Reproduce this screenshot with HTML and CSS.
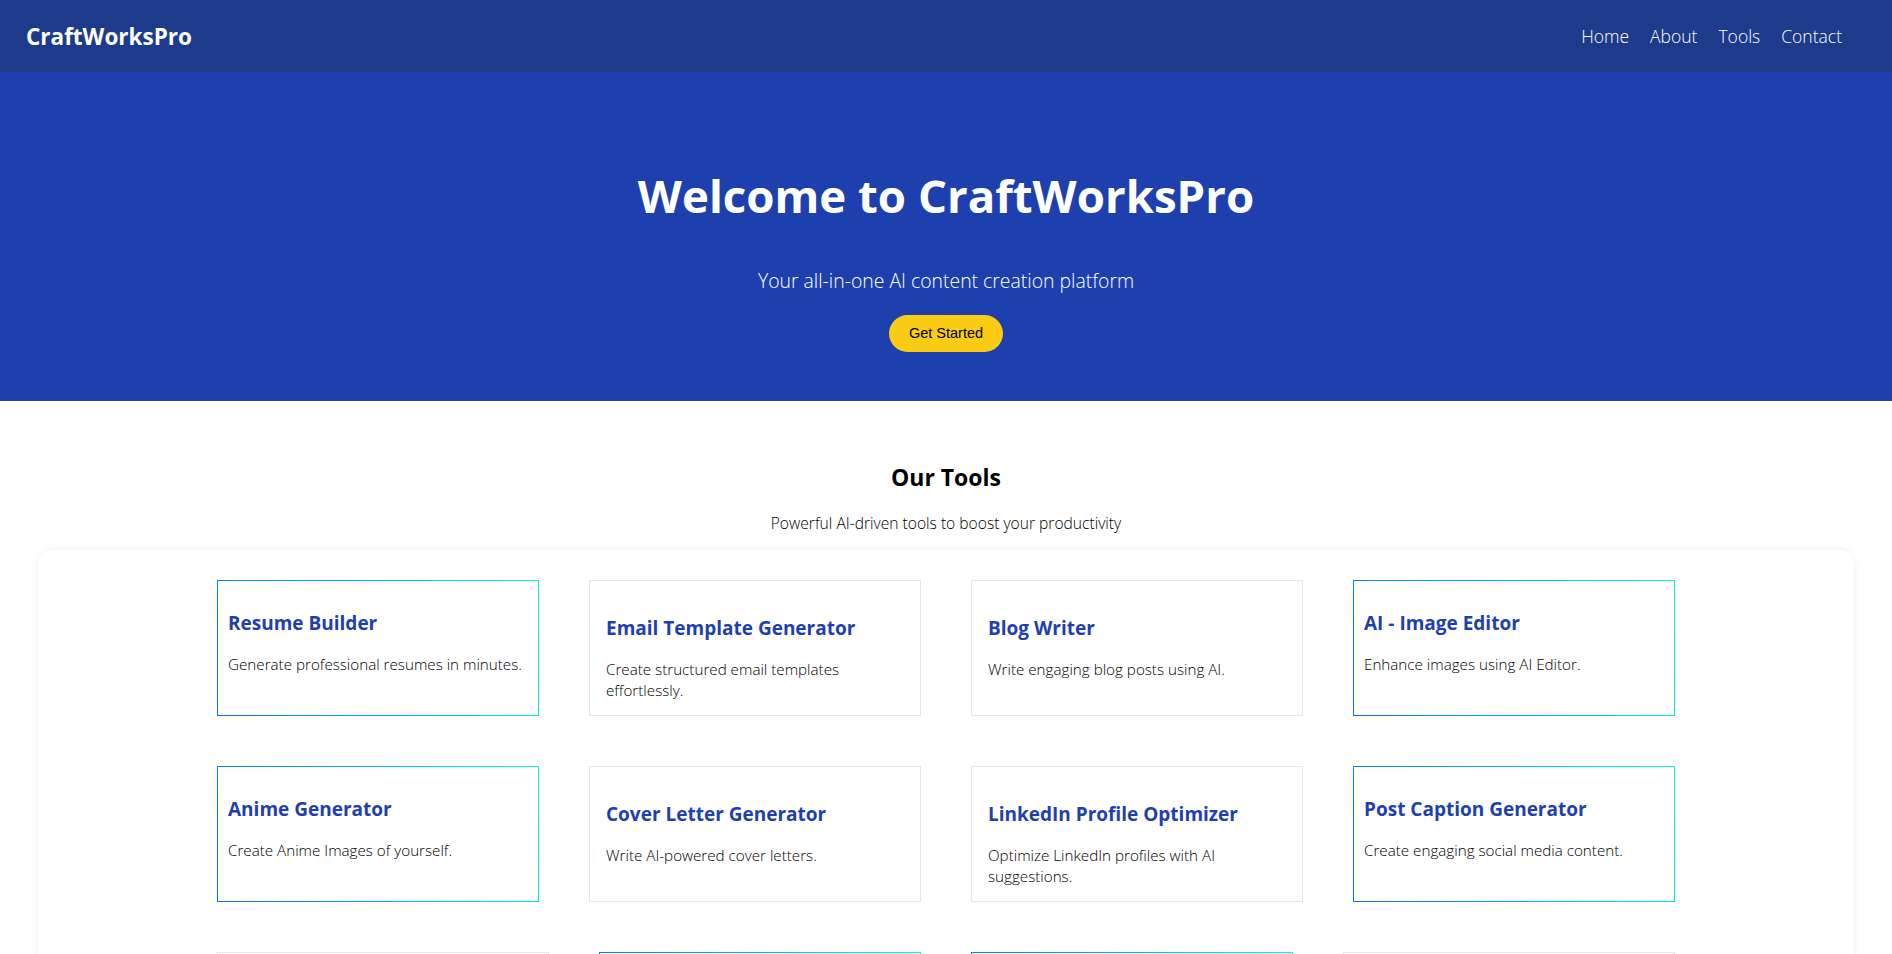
FILE: index.html
```html
<!DOCTYPE html>
<html lang="en">
<head>
<meta charset="utf-8">
<title>CraftWorksPro</title>
<link rel="stylesheet" href="styles.css">
</head>
<body>
<header class="navbar">
  <div class="logo">CraftWorksPro</div>
  <nav class="nav">
    <a href="#">Home</a>
    <a href="#">About</a>
    <a href="#">Tools</a>
    <a href="#">Contact</a>
  </nav>
</header>

<section class="hero">
  <h1 class="hero-title">Welcome to CraftWorksPro</h1>
  <p class="hero-sub">Your all-in-one AI content creation platform</p>
  <button class="hero-btn">Get Started</button>
</section>

<section class="tools">
  <h2 class="tools-title">Our Tools</h2>
  <p class="tools-sub">Powerful AI-driven tools to boost your productivity</p>
  <div class="panel">
    <div class="cards">
      <div class="card card-grad"><h3>Resume Builder</h3><p>Generate professional resumes in minutes.</p></div>
      <div class="card card-plain"><h3>Email Template Generator</h3><p>Create structured email templates effortlessly.</p></div>
      <div class="card card-plain"><h3>Blog Writer</h3><p>Write engaging blog posts using AI.</p></div>
      <div class="card card-grad"><h3>AI - Image Editor</h3><p>Enhance images using AI Editor.</p></div>

      <div class="card card-grad"><h3>Anime Generator</h3><p>Create Anime Images of yourself.</p></div>
      <div class="card card-plain"><h3>Cover Letter Generator</h3><p>Write AI-powered cover letters.</p></div>
      <div class="card card-plain"><h3>LinkedIn Profile Optimizer</h3><p>Optimize LinkedIn profiles with AI suggestions.</p></div>
      <div class="card card-grad"><h3>Post Caption Generator</h3><p>Create engaging social media content.</p></div>

      <div class="card card-plain"><h3>Story Generator</h3><p>Craft creative stories with AI.</p></div>
      <div class="card card-grad"><h3>Text Summarizer</h3><p>Summarize long content instantly.</p></div>
      <div class="card card-grad"><h3>Code Assistant</h3><p>Get help writing and fixing code.</p></div>
      <div class="card card-plain"><h3>Translator</h3><p>Translate text into many languages.</p></div>
    </div>
  </div>
</section>
</body>
</html>
```

FILE: styles.css
```css
* { box-sizing: border-box; }

body {
  margin: 0;
  font-family: "Open Sans", "Noto Sans", sans-serif;
  color: #000;
  background: #fff;
}

.navbar {
  height: 72px;
  background: #1e3a8a;
  display: flex;
  align-items: center;
  justify-content: space-between;
  padding: 0 50px 0 26px;
}

.logo {
  color: #fff;
  font-size: 22.5px;
  font-weight: 700;
}

.nav {
  display: flex;
  gap: 21px;
}

.nav a {
  color: #fff;
  text-decoration: none;
  font-size: 17.5px;
  font-weight: 300;
}

.hero {
  background: #1e40af;
  text-align: center;
  padding: 95px 0 49px;
}

.hero-title {
  margin: 0 0 42px;
  font-size: 45.6px;
  line-height: 57.6px;
  font-weight: 700;
  color: #fff;
}

.hero-sub {
  margin: 0 0 20px;
  font-size: 19.4px;
  line-height: 28px;
  font-weight: 350;
  color: #fff;
}

.hero-btn {
  display: inline-block;
  height: 37px;
  padding: 0 20px;
  border: none;
  border-radius: 999px;
  background: #facc15;
  color: #000;
  font-family: "Liberation Sans", Arial, sans-serif;
  font-size: 14.5px;
  line-height: 37px;
}

.tools {
  padding-top: 60px;
  text-align: center;
}

.tools-title {
  margin: 0 0 18px;
  font-size: 23px;
  line-height: 32px;
  font-weight: 700;
}

.tools-sub {
  margin: 0 0 15px;
  font-size: 15.6px;
  line-height: 24px;
  font-weight: 350;
}

.panel {
  width: 96%;
  margin: 0 auto;
  background: #fff;
  border-radius: 14px;
  box-shadow: 0 0 8px rgba(0, 0, 0, 0.07);
  padding: 30px 0 60px;
}

.cards {
  width: 1458px;
  margin: 0 auto;
  display: flex;
  flex-wrap: wrap;
  gap: 50px;
  text-align: left;
}

.card {
  border: 1px solid #e5e7eb;
  background: #fff;
}

.card h3 {
  margin: 0 0 17px;
  font-size: 19px;
  line-height: 28px;
  font-weight: 700;
  color: #1e40af;
}

.card p {
  margin: 0;
  font-size: 15.2px;
  line-height: 21px;
  font-weight: 350;
  color: #000;
}

.card-plain {
  width: 332px;
  padding: 33.5px 16px 13.5px;
}

.card-grad {
  width: 322px;
  padding: 28.5px 10px 13.5px;
  border: 1px solid transparent;
  background:
    linear-gradient(#fff, #fff) padding-box,
    linear-gradient(70deg, #0a6cff, #00ffd0) border-box;
}
```
